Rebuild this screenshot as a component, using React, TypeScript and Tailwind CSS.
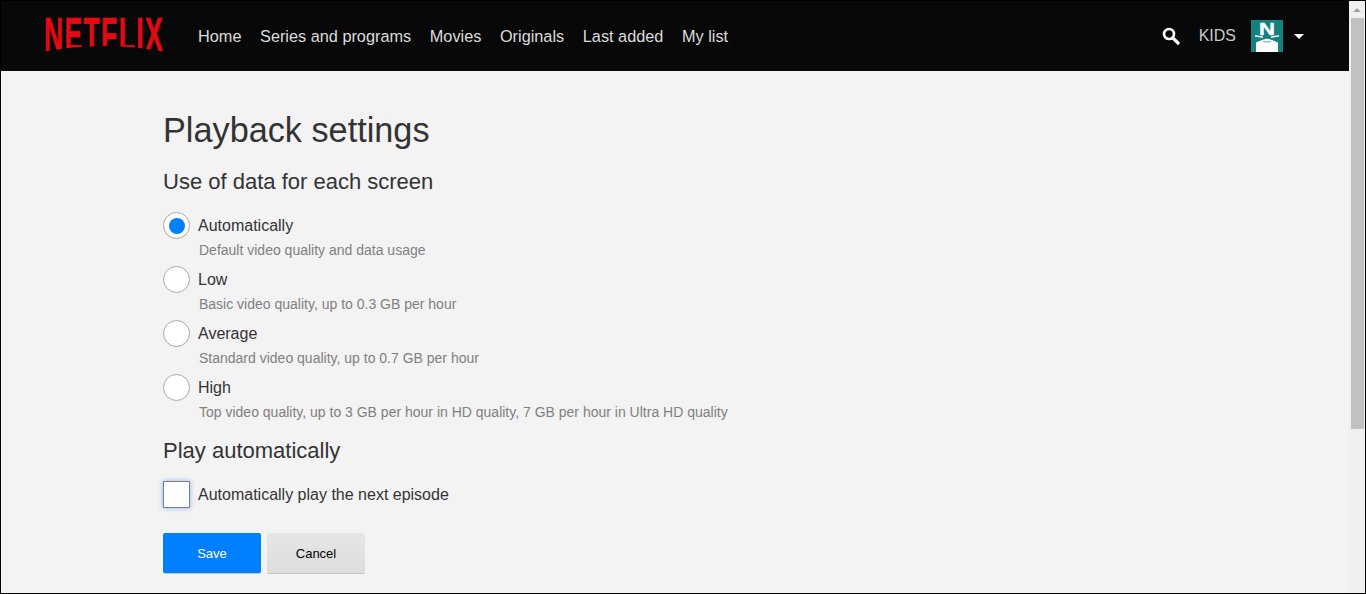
const nav = ["Home", "Series and programs", "Movies", "Originals", "Last added", "My list"];
const options = [
  ["Automatically", "Default video quality and data usage"],
  ["Low", "Basic video quality, up to 0.3 GB per hour"],
  ["Average", "Standard video quality, up to 0.7 GB per hour"],
  ["High", "Top video quality, up to 3 GB per hour in HD quality, 7 GB per hour in Ultra HD quality"],
];

function Logo() {
  return (
    <svg width="120" height="60" viewBox="0 0 120 60" className="shrink-0 overflow-visible">
      <defs>
        <clipPath id="logo-arc">
          <path d="M-2 0H122V46Q60 34 -2 46Z" />
        </clipPath>
      </defs>
      <g clipPath="url(#logo-arc)">
        <text
          x={0}
          y={45}
          textLength={120}
          lengthAdjust="spacingAndGlyphs"
          fontFamily="Liberation Sans"
          fontWeight="700"
          fontSize="48"
          letterSpacing="2.5"
          fill="#e50914"
          stroke="#e50914"
          strokeWidth="0.6"
        >
          NETFLIX
        </text>
      </g>
    </svg>
  );
}

function Avatar() {
  return (
    <svg width="32" height="32" viewBox="0 0 32 32" className="shrink-0">
      <rect width="32" height="32" fill="#12817f" />
      <text x="8" y="14.5" textLength="16" lengthAdjust="spacingAndGlyphs" fontFamily="Liberation Sans" fontWeight="700" fontSize="17" fill="#fff" stroke="#fff" strokeWidth="0.4">N</text>
      <path d="M4 15l8 1.5v1.5l-8-1.5z" fill="#fff" />
      <path d="M28 15l-8 1.5v1.5l8-1.5z" fill="#fff" />
      <path d="M5 32V22.5L11 20l5-1.5 5 1.5 6 2.5V32z" fill="#fff" />
      <path d="M11 21h10l-2 1.5h-6z" fill="#8fc7c5" />
    </svg>
  );
}

export default function App() {
  return (
    <div className="h-[594px] w-[1366px] overflow-hidden border border-black bg-[#f3f3f3] font-['Liberation_Sans',Arial,sans-serif]">
      <div className="flex h-full">
        <div className="min-w-0 flex-1">
          <header className="flex h-[70px] items-center bg-[#080808] pl-[43px] pr-[45px]">
            <Logo />
            <nav className="ml-[34px] flex gap-[18.6px] text-[16.3px] text-[#dcdcdc]">
              {nav.map((n) => (
                <span key={n}>{n}</span>
              ))}
            </nav>
            <div className="ml-auto flex items-center">
              <svg width="18" height="18" viewBox="0 0 18 18" className="mr-[19px]">
                <circle cx="7" cy="7" r="5" fill="none" stroke="#fff" strokeWidth="2.6" />
                <path d="M10.8 10.8L16 16" stroke="#fff" strokeWidth="3.2" strokeLinecap="round" />
              </svg>
              <span className="text-base text-[#c8c8c8]">KIDS</span>
              <span className="ml-[15px]"><Avatar /></span>
              <span className="ml-[11px] h-0 w-0 border-x-[5px] border-t-[5px] border-x-transparent border-t-white" />
            </div>
          </header>
          <main className="pl-[162px] text-[#333]">
            <h1 className="mt-[38px] text-[34.25px] leading-[42px]">Playback settings</h1>
            <h2 className="mt-[18px] text-[22px] leading-[26px]">Use of data for each screen</h2>
            <div className="mt-[17px]">
              {options.map(([t, d], i) => (
                <div key={t} className="flex h-[54px] gap-2">
                  <span className="flex size-[27px] shrink-0 items-center justify-center rounded-full border border-[#a8a8a8] bg-white">
                    {i === 0 && <span className="size-4 rounded-full bg-[#0080ff]" />}
                  </span>
                  <div className="pt-px">
                    <div className="text-base leading-[26px]">{t}</div>
                    <div className="mt-px pl-px text-sm leading-[20px] text-[#808080]">{d}</div>
                  </div>
                </div>
              ))}
            </div>
            <h2 className="mt-[10px] text-[22px] leading-[26px]">Play automatically</h2>
            <div className="mt-[17px] flex items-center gap-2">
              <span className="size-[27px] shrink-0 border border-[#808080] bg-white shadow-[0_0_5px_#80b4ff]" />
              <span className="text-base">Automatically play the next episode</span>
            </div>
            <div className="mt-[25px] flex gap-[6px]">
              <button className="h-10 w-[98px] rounded-[2px] bg-[#0080ff] pt-px text-[13px] text-white shadow-[0_1px_0_rgba(0,0,0,0.2)]">Save</button>
              <button className="h-10 w-[98px] rounded-[2px] bg-gradient-to-b from-[#e6e6e6] to-[#dddddd] pt-px text-[13px] text-black shadow-[0_1px_0_rgba(0,0,0,0.2)]">Cancel</button>
            </div>
          </main>
        </div>
        <div className="flex w-[16px] shrink-0 flex-col bg-[#f0f0f0]">
          <div className="flex h-[17px] items-center justify-center">
            <span className="h-0 w-0 border-x-[4px] border-b-[4px] border-x-transparent border-b-[#a3a3a3]" />
          </div>
          <div className="ml-[2px] mr-px h-[411px] bg-[#c1c1c1]" />
        </div>
      </div>
    </div>
  );
}
